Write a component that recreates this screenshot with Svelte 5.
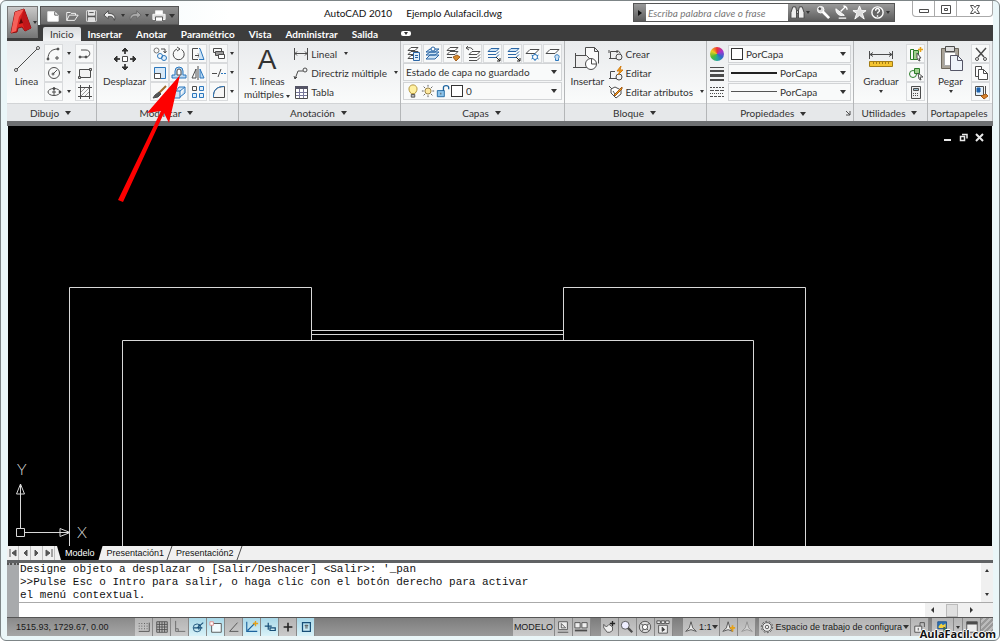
<script>
    const icons = {
        // quick access
        newFile: `<path d="M2 3h8l4 4v7H2z" fill="#fff" stroke="#eee"/><path d="M10 3v4h4"/>`,
        open: `<path d="M2 13V4h4l1 1h5v2M2 13l3-6h10l-4 6z" stroke="#fff" fill="#777"/>`,
        save: `<path d="M3 2h11v12H3z" fill="#555" stroke="#eee"/><path d="M5 2h7v5H5zM5 10h7v4H5z" fill="#ddd" stroke="#eee"/><path d="M6 4h5" />`,
        undo: `<path d="M6 2L1 7l5 4V8.500c4-.5 6 .5 7 4.500 2-5-1-8-7-8z" fill="#eee" stroke="#444"/>`,
        redo: `<path d="M10 2l5 5-5 4V8.500c-4-.5-6 .5-7 4.500-2-5 1-8 7-8z" fill="#aaa" stroke="#666"/>`,
        print: `<path d="M4 6V2h8v4M4 10v4h8v-4" fill="#fff" stroke="#eee"/><path d="M1 6h14v6H1z" fill="#ddd" stroke="#fff"/><path d="M4 9h8v5H4z" fill="#fff"/>`,
        // dibujo
        arc: `<path d="M2 13C2 6 6 3 12 3M9 12h4M11 10v4"/><circle cx="2" cy="13" r="1" fill="#444"/><circle cx="12" cy="3" r="1" fill="#444"/>`,
        circle: `<circle cx="8" cy="8" r="5.500"/><path d="M7 9l4-4"/><circle cx="7" cy="9" r="1"/>`,
        ellipse: `<ellipse cx="8" cy="8" rx="6" ry="3.500"/><path d="M6 8h4M8 5v6"/><circle cx="8" cy="4.500" r="1" fill="#444"/><circle cx="14" cy="8" r="1" fill="#444"/>`,
        polyline: `<path d="M4 4h5c5 0 5 7 0 7H4"/><circle cx="3" cy="11" r="1" fill="#444"/><circle cx="9" cy="11" r="1" fill="#444"/>`,
        rect: `<path d="M2.500 4.500h11v8h-11z" fill="#f2f2f2"/><path d="M1.500 11.500h2v2h-2zM12.500 3.500h2v2h-2z" fill="#ccc"/>`,
        hatch: `<path d="M3.500 1v14M12.500 1v14M1 3.500h14M1 12.500h14" /><path d="M4 8l4-4M4 12l8-8M8 12l4-4" stroke="#999"/>`,
        // modificar
        copy: `<circle cx="4.500" cy="4.500" r="2.500" stroke="#777"/><circle cx="12" cy="12" r="2.500" stroke="#2b77bd" fill="#e1effa"/><circle cx="8" cy="10" r="2.500" stroke="#2b77bd"/><path d="M9 3h4v3M11.500 5L13 7l1.500-2"/>`,
        rotate: `<path d="M10.500 3.500A5.500 5.500 0 1 1 6 3M6 1l3 2-3 2"/>`,
        stretch: `<path d="M8 13.500H2.500v-11H8M5 9.500h5M8 7.500l2 2-2 2"/><path d="M9 2.500h1l4 11H9" stroke="#2b77bd" fill="#cfe4f5"/>`,
        scale: `<path d="M2.500 2.500h11v11h-5v-5h-6z" fill="#d8e9f7" stroke="#2b77bd"/><path d="M2.500 8.500h6v5h-6z" fill="#fff"/>`,
        offset: `<path d="M1 13h14v-3h-3V6a4 4 0 0 0-8 0v4H1z" stroke="#2b77bd" fill="#b9d8f2"/><path d="M6 10V6a2 2 0 0 1 4 0v4z" fill="#fff"/>`,
        mirror: `<path d="M6 4v9H2z"/><path d="M10 4v9h4z" fill="#b9d8f2" stroke="#2b77bd"/><path d="M8 1v14"/>`,
        brush: `<path d="M14 2L7 9" stroke="#a06a2a" stroke-width="2"/><path d="M7 8L3 11l-2 3 5-1 3-3z" fill="#555"/>`,
        box: `<path d="M2 7h7v7H2zM5 7l3-4h6l-5 4M14 3v6l-5 4" fill="#cfe4f5" stroke="#2b77bd"/>`,
        array: `<path d="M2.500 2.500h4v4h-4z"/><path d="M9.500 2.500h4v4h-4zM2.500 9.500h4v4h-4zM9.500 9.500h4v4h-4z" stroke="#2b77bd" fill="#e1effa"/>`,
        order: `<path d="M2.500 2.500h8v4h-8z"/><path d="M4.500 5.500h8v4h-8z" fill="#999"/><path d="M7.500 8.500h6v4h-6z" fill="#fff"/>`,
        trim: `<path d="M1 8.500h5M7 12l3-8" /><path d="M10 8.500h5" stroke="#2b77bd" stroke-dasharray="2 1"/>`,
        fillet: `<path d="M2.500 13.500C2 6 6 2.500 13.500 2.500v11z" fill="#f6f6f6"/><path d="M2.500 13C2 6 6 2.500 13 2.500" stroke="#2b77bd"/>`,
        // anotación
        linear: `<path d="M1.500 2v12M14.500 2v12M2 7.500h12M4 5.500l-2 2 2 2M12 5.500l2 2-2 2"/>`,
        leader: `<path d="M2 14L5 6h5M1 11l1 3 2-2"/><circle cx="12" cy="5" r="2"/>`,
        table: `<path d="M2.500 2.500h12v12h-12z" fill="#fff"/><path d="M2 3.500h13" stroke="#556" stroke-width="3"/><path d="M3 8.500h11M3 11.500h11M6.500 5v9M10.500 5v9" stroke="#779"/>`,
        // capas
        layersBlue: `<path d="M5 3h9l-4 3H1zM5 6h9l-4 3H1zM5 9h9l-4 4H1z" fill="#cfe4f5" stroke="#2b66a5"/><circle cx="8" cy="3" r="2" fill="#fff" stroke="#2b66a5"/>`,
        layerProps: `<path d="M6 1.500h7l-3 3H3zM6 5.500h7l-3 3H3zM6 9.500h7l-3 3H3z" fill="#fff"/><path d="M8.500 6.500h6v8h-6z" fill="#e1effa" stroke="#2b66a5"/><path d="M10 9.500h3M10 11.500h3" stroke="#2b66a5"/>`,
        layerBrush: `<path d="M5 1.500h8l-3 3H2zM5 5.500h8l-3 3H2z" fill="#fff"/><path d="M2 11.500h5"/><path d="M8 11l4-2 3 2-4 4z" fill="#d58a2c" stroke="#a05a18"/>`,
        layerPrev: `<path d="M7 5.500h8l-3 3H4zM4 11.500h8l3-3M4 14.500h8l3-3" fill="#fff"/><path d="M8 4C7 2 5 1 2 2M3 0L1 2l3 2"/>`,
        layerIso: `<path d="M6 2.500h8l-3 3H3z" fill="#cfe4f5" stroke="#2b66a5"/><path d="M3 8.500h8l3-3M3 11.500h8l3-3" stroke="#2b66a5"/><path d="M11 11l4 4M15 12v3h-3" stroke="#222"/>`,
        layerFreeze: `<path d="M5 3.500h9l-4 4H1z" fill="#fff"/><path d="M10 7v8M6.500 9l7 4M13.500 9l-7 4" stroke="#2b77bd"/><circle cx="10" cy="11" r="2.500" stroke="#2b77bd" fill="#fff"/>`,
        layerOff: `<path d="M5 3.500h9l-4 4H1z" fill="#fff"/><path d="M10.500 14.500v-2c-3-5 6-5 3 0v2z" fill="#cfe4f5" stroke="#2b77bd"/>`,
        bulb: `<path d="M6 11C1 6 4 1 8 1s7 5 2 10z" fill="#fff0a0" stroke="#a98a2a"/><path d="M6 12h4v3H6z" fill="#bbb"/>`,
        sun: `<circle cx="8" cy="8" r="3.500" fill="#ffe9a0" stroke="#8a7233"/><path d="M8 1v2M8 13v2M1 8h2M13 8h2M3 3l1.500 1.500M11.500 11.500L13 13M13 3l-1.500 1.500M3 13l1.500-1.500"/>`,
        unlock: `<path d="M1.500 7.500h8v7h-8z" fill="#8cc3ea" stroke="#1c639e"/><path d="M8.500 8V4c0-3 6-3 6 0v2" stroke="#1c639e" stroke-width="1.500"/><path d="M5.500 10v2"/>`,
        // bloque
        create: `<path d="M8 12.500H1M2.500 12V5.500H10M10 4.500l2.500 3"/><circle cx="11" cy="11" r="3"/><path d="M1 4v3M9 4v3"/>`,
        edit: `<path d="M8 13.500H1M2.500 13V6.500H7"/><circle cx="11" cy="12" r="3"/><path d="M13 1L9 6h3l-2 4 5-5h-3z" fill="#f6a21e" stroke="#d27d12"/>`,
        attrs: `<path d="M3 5l4-2 6 3v4l-5 4-5-5z" fill="#fff"/><path d="M1 2l3 3"/><path d="M14 3L6 11l1 1 7-7z" fill="#f6a21e" stroke="#a05a18"/><path d="M5 7l2 3"/>`,
        // propiedades
        weight: `<path d="M1 2.500h14" /><path d="M1 6h14" stroke-width="2"/><path d="M1 10.500h14" stroke-width="3"/><path d="M1 15h14" stroke-width="2"/>`,
        linetype: `<path d="M1 3.500h14" stroke-dasharray="2 1"/><path d="M1 6.500h14" stroke-dasharray="4 1"/><path d="M1 9.500h14" stroke-dasharray="1 1"/><path d="M1 12.500h14" stroke-dasharray="3 1"/>`,
        // utilidades, portapapeles
        quickSelect: `<path d="M6 3.500H2.500v10H6" stroke="#2c7d2a"/><path d="M5.500 4.500h5v9h-5z" fill="#9fd08e" stroke="#2c7d2a"/><path d="M9 7l4 5h-2l1 3-2-1-1-2z" fill="#fff"/><path d="M12.500 1v5M10 3.500h5" stroke="#e6a117" stroke-width="1.500"/>`,
        selectSame: `<circle cx="5" cy="9" r="3.500" stroke="#2c7d2a"/><path d="M6.500 3.500h5v5h-5z" fill="#9fd08e" stroke="#2c7d2a"/><path d="M10 8l5 4h-3l1 3-2-1z" fill="#fff"/>`,
        calc: `<path d="M3.500 2.500h9v12h-9z" fill="#eee"/><path d="M5.500 4.500h5v2h-5z" fill="#9bc"/><path d="M5 9.500h6M5 11.500h6" stroke-dasharray="1 1"/>`,
        cut: `<path d="M3 2l8 9M13 2l-8 9" stroke-width="1.500"/><circle cx="4" cy="13" r="1.500"/><circle cx="12" cy="13" r="1.500"/>`,
        copyDoc: `<path d="M2.500 1.500h6v10h-6z" fill="#fff"/><path d="M5.500 4.500h5l4 4v6h-9z" fill="#fff"/><path d="M10.500 4.500v4h4"/>`,
        matchProps: `<path d="M2.500 2.500h8v9h-8zM12.500 2v8" fill="#e1effa"/><path d="M4 4h3v4H4z" fill="#1f62ad" stroke="#1f62ad"/><path d="M8 12l5-2 2 2-4 3z" fill="#d9822b" stroke="#a05a18"/>`,
        // info center
        binoculars: `<path d="M1 14V8l2-6h3l1 4v8zM9 14V6l1-4h3l2 6v6zM7 6h2v3H7z" fill="#eee" stroke="#444"/>`,
        key: `<circle cx="5" cy="5" r="3.500" fill="#ddd" stroke="#fff"/><path d="M7 7l7 7" stroke="#fff" stroke-width="3"/><circle cx="4" cy="4" r="1" fill="#555"/>`,
        dish: `<path d="M2 4c0 6 4 8 9 7z" fill="#eee" stroke="#fff"/><path d="M7 7l5-5M10 1c2 0 4 2 4 4M5 14h8" stroke="#fff" stroke-width="1.500"/>`,
        star: `<path d="M8 1l2 5h5l-4 3 2 6-5-4-5 4 2-6-4-3h5z" fill="#ddd" stroke="#fff"/>`,
        help: `<circle cx="8" cy="8" r="6" fill="#666" stroke="#fff" stroke-width="1.500"/><path d="M6 6c0-3 4-3 4 0 0 1.500-2 1.500-2 3M8 11v1.500" stroke="#fff" stroke-width="1.500"/>`,
        // status bar
        snap: `<path d="M2 4h10M2 7h10M2 10h10" stroke-dasharray="1 2"/><path d="M2 13h12V3"/>`,
        grid: `<path d="M2 2h12v12H2zM5 2v12M8 2v12M11 2v12M2 5h12M2 8h12M2 11h12"/>`,
        ortho: `<path d="M3 1v12h11M3 10h3v3" stroke="#666"/>`,
        polar: `<circle cx="7" cy="9" r="4.500" stroke="#174e77"/><path d="M3 9h10M7 9l7-6M9 5v6" stroke="#174e77" stroke-width="1.300"/>`,
        osnap: `<path d="M3 4h11v10H3z" fill="#f3fbfe"/><path d="M1 2h4v4H1z" fill="#fff" stroke="#d88"/>`,
        otrack: `<path d="M12 3L3 13h10"/>`,
        ducs: `<path d="M2 2v11h12M3 12l9-9" stroke="#1c639e" stroke-width="1.300"/><path d="M12 1v6M9 4h6" stroke="#e6a117" stroke-width="1.500"/>`,
        dyn: `<path d="M6 3v8M2 7h8M8 9h6v3H8z" stroke="#174e77" stroke-width="1.400"/>`,
        lwt: `<path d="M8 3v10M3 8h10" stroke="#222" stroke-width="1.800"/>`,
        qp: `<path d="M4 3h9v10H4z" stroke="#174e77" stroke-width="1.400"/><path d="M7 6h3v1H7zM7 9h3" />`,
        modelSpace: `<path d="M3 2h10v9H3zM2 14h12" fill="#eee"/><path d="M6 4v5h5z"/>`,
        layouts: `<path d="M1 3h6v6H1zM9 3h6v6H9z" fill="#eee"/><path d="M1 12h14" stroke-width="2"/>`,
        pan: `<path d="M2 5l3 3 3-3 4 3v4l-3 2H6L2 9z" fill="#eee"/><path d="M12 1v6M9 4h6" stroke="#222" stroke-width="1.500"/>`,
        zoom: `<circle cx="6" cy="6" r="4.500" fill="#eef"/><path d="M9 9l5 5" stroke-width="2.500"/>`,
        wheel: `<circle cx="8" cy="8" r="6.500" fill="#ddd"/><circle cx="8" cy="8" r="3" fill="#fff"/><path d="M3 4l3 2M13 4l-3 2M5 13l1-3M12 12l-2-2"/>`,
        motion: `<path d="M1 1h4v3H1zM6 1h4v3H6zM11 1h4v3h-4zM3 6h10v9H3z" fill="#eee"/><path d="M7 8v5l3-2z" fill="#333"/>`,
        annot: `<path d="M8 2L6 9l-4 4 6-2 6 2-4-4z" fill="#eee"/>`,
        annotStar: `<path d="M7 2L5 9l-4 4 6-2 5 2-3-4z" fill="#eee"/><path d="M12 6v7M9 9h6" stroke="#e6a117" stroke-width="2"/>`,
        gear: `<circle cx="8" cy="8" r="5" fill="#eee"/><circle cx="8" cy="8" r="6.500" stroke-dasharray="2 2"/><circle cx="8" cy="8" r="2"/>`,
        lock: `<path d="M2 7h8v7H2z" fill="#eee"/><path d="M8 7V3h5v5M6 9v3"/>`,
        flag: `<path d="M2 2h10v8H2z" fill="#2f73b5" stroke="#1c4e88"/><path d="M3 7l3-3 2 2 3-2v5H3z" fill="#f4d13c" stroke="none"/><path d="M9 8l5 4-5 3z" fill="#3c9a3c"/>`,
        clean: `<path d="M2 2h12v12H2z" fill="#eee"/><path d="M2 3.500h12" stroke-width="3"/>`,
    };

    const menus = ["Inicio", "Insertar", "Anotar", "Paramétrico", "Vista", "Administrar", "Salida"];
    let activeMenu = $state("Inicio");

    const draw = [["arc", "polyline"], ["circle", "rect"], ["ellipse", "hatch"]];
    const modify = [
        ["copy", "rotate", "stretch", "order"],
        ["scale", "offset", "mirror", "trim"],
        ["brush", "box", "array", "fillet"],
    ];
    const layerTools = ["layerProps", "layersBlue", "layerBrush", "layerPrev", "layerIso", "layerIso", "layerFreeze", "layerOff"];
    const blockTools = [["create", "Crear"], ["edit", "Editar"], ["attrs", "Editar atributos"]];

    const sheets = ["Presentación1", "Presentación2"];

    const modes = ["snap", "grid", "ortho", "polar", "osnap", "otrack", "ducs", "dyn", "lwt", "qp"];
    let activeModes = $state(["polar", "osnap", "ducs", "dyn", "qp"]);
    function toggleMode(mode) {
        activeModes = activeModes.includes(mode)
            ? activeModes.filter((m) => m !== mode)
            : [...activeModes, mode];
    }
</script>

{#snippet icon(name)}
    <svg class="icon" viewBox="0 0 16 16">{@html icons[name]}</svg>
{/snippet}

{#snippet tool(name)}
    <button class="tool" aria-label={name}>{@render icon(name)}</button>
{/snippet}

{#snippet footer(name, arrow = true)}
    <div class="panel-title">
        {name}
        {#if arrow}<i class="caret"></i>{/if}
    </div>
{/snippet}

<div class="window">
    <header>
        <div class="app-cell">
            <button class="app" aria-label="Menú de la aplicación">
                <svg width="22" height="28" viewBox="0 0 22 28">
                    <path d="M1 25L5 4l9-3 7 19-6 3-3-4-4 1-1 4z" fill="#e2231f" stroke="#8c1010" />
                    <path d="M5 4l9-3-3 5-2 3-3 14-5 2z" fill="#f4615a" stroke="none" />
                    <path d="M14 1l7 19-6 3-4-13z" fill="#c0171a" stroke="none" />
                    <path d="M9 16l2-6 2 5z" fill="#5d0808" stroke="none" />
                </svg>
                <i class="caret small"></i>
            </button>
        </div>
        <div class="titlebar">
            <div class="quick">
                {#each ["newFile", "open", "save", "undo"] as name}{@render tool(name)}{/each}
                <i class="caret small"></i>
                {@render tool("redo")}
                <i class="caret small"></i>
                {@render tool("print")}
                <i class="caret"></i>
            </div>
            <div class="title"><span>AutoCAD 2010</span><span>Ejemplo Aulafacil.dwg</span></div>
            <div class="info">
                <i class="play"></i>
                <input type="text" placeholder="Escriba palabra clave o frase" aria-label="Buscar" />
                {@render tool("binoculars")}
                <i class="caret small"></i>
                {#each ["key", "dish", "star", "help"] as name}{@render tool(name)}{/each}
                <i class="caret small"></i>
            </div>
            <div class="controls">
                <button aria-label="Minimizar"><svg width="12" height="12"><path d="M1.500 6.500h9v3h-9z" /></svg></button>
                <button aria-label="Restaurar"><svg width="12" height="12"><path d="M1.500 2.500h9v8h-9zM4.500 5.500h3v2h-3z" /></svg></button>
                <button class="close" aria-label="Cerrar"><svg width="12" height="12"><path d="M1.500 2.500h3l1.500 2 1.500-2h3L8 6.500l2.500 4h-3L6 8.500l-1.500 2h-3L4 6.500z" /></svg></button>
            </div>
        </div>
        <nav class="menus">
            {#each menus as menu}
                <button class:active={activeMenu === menu} onclick={() => (activeMenu = menu)}>{menu}</button>
            {/each}
            <span class="pill"><i class="caret small"></i></span>
        </nav>
    </header>

    <div class="ribbon">
        <section>
            <div class="panel">
                <button class="big">
                    <svg width="28" height="28"><path d="M4 24L24 4" /><circle cx="3" cy="25" r="1.500" fill="#fff" /><circle cx="25" cy="3" r="1.500" fill="#fff" /></svg>
                    Línea
                </button>
                <div class="rows">
                    {#each draw as [left, right]}
                        <div class="row">{@render tool(left)}<i class="caret small drop"></i>{@render tool(right)}</div>
                    {/each}
                </div>
            </div>
            {@render footer("Dibujo")}
        </section>

        <section>
            <div class="panel">
                <button class="big">
                    <svg width="28" height="28"><path d="M14 5v4M14 19v4M5 14h4M19 14h4" stroke-width="2" /><path d="M14 3l3 3h-6zM14 25l3-3h-6zM3 14l3-3v6zM25 14l-3-3v6z" fill="#333" stroke="#333" /><path d="M11.500 11.500h5v5h-5z" fill="#fff" /></svg>
                    Desplazar
                </button>
                <div class="rows modify">
                    {#each modify as names}
                        <div class="row">{#each names as name}{@render tool(name)}{/each}<i class="caret small drop"></i></div>
                    {/each}
                </div>
            </div>
            {@render footer("Modificar")}
        </section>

        <section>
            <div class="panel">
                <button class="big text">
                    <span class="letter">A</span>
                    T. líneas<span>múltiples <i class="caret small"></i></span>
                </button>
                <div class="rows labels">
                    <button>{@render icon("linear")}Lineal <i class="caret small"></i></button>
                    <button>{@render icon("leader")}Directriz múltiple <i class="caret small"></i></button>
                    <button>{@render icon("table")}Tabla</button>
                </div>
            </div>
            {@render footer("Anotación")}
        </section>

        <section>
            <div class="panel">
                <div class="rows wide">
                    <div class="row spread">{#each layerTools as name}{@render tool(name)}{/each}</div>
                    <div class="combo">
                        <select aria-label="Estado de capa"><option>Estado de capa no guardado</option></select>
                        <i class="caret"></i>
                    </div>
                    <div class="combo">
                        {@render icon("bulb")}{@render icon("sun")}{@render icon("unlock")}<b class="swatch"></b>
                        <select aria-label="Capa"><option>0</option></select>
                        <i class="caret"></i>
                    </div>
                </div>
            </div>
            {@render footer("Capas")}
        </section>

        <section>
            <div class="panel">
                <button class="big">
                    <svg width="28" height="28"><path d="M12.500 12V2.500h9l4 4v12M21.500 2.500v4h4" fill="#fafafa" /><path d="M2.500 10.500h11l3 3v9h-14z" fill="#eee" /><circle cx="18" cy="19" r="5.500" fill="#fff" /><path d="M18.500 14v5h5M0 22.500h4M2.500 8v4" /></svg>
                    Insertar
                </button>
                <div class="rows labels">
                    {#each blockTools as [name, label]}
                        <button>{@render icon(name)}{label}{#if name === "attrs"}<i class="caret small"></i>{/if}</button>
                    {/each}
                </div>
            </div>
            {@render footer("Bloque")}
        </section>

        <section>
            <div class="panel">
                <div class="rows wide props">
                    <div class="row">
                        <i class="wheel"></i>
                        <div class="combo">
                            <b class="swatch"></b>
                            <select aria-label="Color"><option>PorCapa</option></select>
                            <i class="caret"></i>
                        </div>
                    </div>
                    {#each ["weight", "linetype"] as name}
                        <div class="row">
                            {@render icon(name)}
                            <div class="combo">
                                <span class="sample {name}"></span>
                                <select aria-label={name}><option>PorCapa</option></select>
                                <i class="caret"></i>
                            </div>
                        </div>
                    {/each}
                </div>
            </div>
            <div class="panel-title">
                <span class="grow">Propiedades <i class="caret"></i></span>
                <svg width="6" height="6"><path d="M1 1l4 4M5 1v4H1" /></svg>
            </div>
        </section>

        <section>
            <div class="panel">
                <button class="big">
                    <svg width="28" height="28"><path d="M2.500 6v8M25.500 6v8M3 9.500h22M6 7.500l-3 2 3 2M22 7.500l3 2-3 2" /><path d="M2.500 16.500h23v5h-23z" fill="#f4c430" stroke="#a27c16" /><path d="M6.500 17v2M9.500 17v2M12.500 17v2M15.500 17v2M18.500 17v2M21.500 17v2" stroke="#a27c16" /></svg>
                    Graduar
                    <i class="caret small"></i>
                </button>
                <div class="rows">
                    {#each ["quickSelect", "selectSame", "calc"] as name}{@render tool(name)}{/each}
                </div>
            </div>
            {@render footer("Utilidades")}
        </section>

        <section>
            <div class="panel">
                <button class="big">
                    <svg width="28" height="28"><path d="M4.500 3.500h17v20h-17z" fill="#a9a398" stroke="#6d675c" /><path d="M8.500 1.500h9v5h-9z" fill="#ddd" /><path d="M7.500 7.500h11v13h-11z" fill="#fff" stroke="#aaa" /><path d="M13.500 10.500h7l5 5v10h-12z" fill="#eef3fa" stroke="#556" /><path d="M20.500 10.500v5h5" stroke="#556" /></svg>
                    Pegar
                    <i class="caret small"></i>
                </button>
                <div class="rows">
                    {#each ["cut", "copyDoc", "matchProps"] as name}{@render tool(name)}{/each}
                </div>
            </div>
            {@render footer("Portapapeles", false)}
        </section>
    </div>

    <main>
        <svg class="plan">
            <path d="M61.500 2000V161.500H303.500V214.500M303.500 204.500H555.500M303.500 208.500H555.500M555.500 214.500V161.500H797.500V2000" />
            <path d="M114.500 2000V214.500H745.500V2000" />
        </svg>
        <svg class="ucs" width="90" height="90">
            <path d="M8.500 72.500h8v8h-8zM12.500 72V28M17 76.500H62M12.500 28l-4 10h8zM62 76.500l-10-4v8z" />
            <text x="9" y="19">Y</text>
            <text x="69" y="82">X</text>
        </svg>
        <div class="doc-controls">
            <svg width="9" height="9"><path d="M1 7h7" stroke-width="2" /></svg>
            <svg width="9" height="9"><path d="M3 1.500h5v4M1.500 3.500h4v4h-4z" stroke-width="1.500" /></svg>
            <svg width="9" height="9"><path d="M1 1l7 7M8 1L1 8" stroke-width="2" /></svg>
        </div>
    </main>

    <div class="sheets">
        <button aria-label="Primera"><svg width="8" height="8"><path d="M1 0v8M7 1v6L3 4z" /></svg></button>
        <button aria-label="Anterior"><svg width="8" height="8"><path d="M6 1v6L3 4z" /></svg></button>
        <button aria-label="Siguiente"><svg width="8" height="8"><path d="M2 1v6l3-3z" /></svg></button>
        <button aria-label="Última"><svg width="8" height="8"><path d="M7 0v8M1 1v6l4-3z" /></svg></button>
        <button class="sheet current">Modelo</button>
        {#each sheets as sheet}
            <button class="sheet">{sheet}</button>
            <svg width="8" height="14"><path d="M6 0L1 14" /></svg>
        {/each}
    </div>

    <div class="command">
        <div class="grip"></div>
        <div class="console">
            <div class="history">
                <div>
                    <p>Designe objeto a desplazar o [Salir/Deshacer] &lt;Salir&gt;: '_pan</p>
                    <p>&gt;&gt;Pulse Esc o Intro para salir, o haga clic con el botón derecho para activar</p>
                    <p>el menú contextual.</p>
                </div>
                <div class="vscroll"><i class="caret up"></i><i class="caret small"></i></div>
            </div>
            <div class="prompt">
                <input type="text" aria-label="Línea de comandos" />
                <div class="hscroll"><i class="arrow left"></i><b></b><i class="arrow"></i></div>
            </div>
        </div>
    </div>

    <footer>
        <span class="coords">1515.93, 1729.67, 0.00</span>
        {#each modes as mode}
            <button class="cell" class:on={activeModes.includes(mode)} aria-label={mode} onclick={() => toggleMode(mode)}>{@render icon(mode)}</button>
        {/each}
        <span class="fill"></span>
        <button class="cell label">MODELO</button>
        {#each ["modelSpace", "layouts"] as name}<button class="cell" aria-label={name}>{@render icon(name)}</button>{/each}
        <span class="gap"></span>
        {#each ["pan", "zoom", "wheel", "motion"] as name}<button class="cell" aria-label={name}>{@render icon(name)}</button>{/each}
        <span class="gap"></span>
        <button class="cell label">{@render icon("annot")}1:1<i class="caret"></i></button>
        <button class="cell" aria-label="Visibilidad">{@render icon("annotStar")}</button>
        <button class="cell faded" aria-label="Escala automática">{@render icon("annot")}</button>
        <span class="gap thin"></span>
        <button class="cell label">{@render icon("gear")}Espacio de trabajo de configura<i class="caret"></i></button>
        <button class="cell" aria-label="Bloquear">{@render icon("lock")}</button>
        <span class="gap thin"></span>
        <button class="cell wide" aria-label="Rendimiento">{@render icon("flag")}</button>
        <button class="cell slim" aria-label="Opciones"><i class="caret small"></i></button>
        <button class="cell" aria-label="Limpiar pantalla">{@render icon("clean")}</button>
        <span class="corner"></span>
    </footer>

    <svg class="pointer" width="70" height="130"><path d="M64 3L31 41l14-2L2 128l5 2L48 41l5 10z" /></svg>
    <div class="watermark">AulaFacil.com</div>
</div>

<style>
    :global(body) {
        background: #fff;
    }
    .window {
        position: relative;
        box-sizing: border-box;
        min-height: 100vh;
        display: flex;
        flex-direction: column;
        padding: 0 6px 4px;
        border: 1px solid #7d8587;
        border-radius: 6px;
        background: #eaf6f8;
        font-family: Lato, "Open Sans", sans-serif;
        font-size: 10px;
        line-height: 14px;
        color: #333;
        overflow: hidden;
    }
    button,
    input,
    select {
        font: inherit;
        color: inherit;
        margin: 0;
        padding: 0;
        border: 0;
        background: none;
        appearance: none;
        white-space: nowrap;
    }
    svg {
        fill: none;
        stroke: #4c4c4c;
        flex: none;
    }
    .icon {
        width: 16px;
        height: 16px;
    }
    .caret {
        flex: none;
        display: inline-block;
        border: 3px solid transparent;
        border-top: 4px solid #333;
        border-bottom: 0;
        vertical-align: middle;
    }
    .caret.small {
        border-width: 2px;
        border-top-width: 3px;
        border-bottom: 0;
    }

    /* title bar and menus */
    header {
        display: grid;
        grid-template-columns: 32px 1fr;
        grid-template-rows: 24px 16px;
    }
    .app-cell {
        grid-row: 1 / 3;
        padding-top: 5px;
        background: linear-gradient(transparent 24px, #3d3d3d 24px);
    }
    .app {
        display: flex;
        align-items: center;
        width: 31px;
        height: 32px;
        padding: 0 2px;
        border: 1px solid #777;
        background: linear-gradient(#c8c8c8, #777);
        box-sizing: border-box;
    }
    .app .caret {
        margin-left: 1px;
    }
    .titlebar {
        display: flex;
        align-items: flex-start;
        background: linear-gradient(90deg, #eaf6f8, #fff 20%, #fff);
    }
    .tool {
        display: flex;
        align-items: center;
        justify-content: center;
        width: 19px;
        height: 19px;
        box-sizing: border-box;
    }
    .quick {
        display: flex;
        align-items: center;
        width: 139px;
        height: 19px;
        margin: 5px 0 0 1px;
        padding: 0 3px;
        box-sizing: border-box;
        justify-content: space-between;
        background: linear-gradient(#8f8f8f, #6b6b6b);
        border: 1px solid #555;
    }
    .info .icon {
        width: 15px;
        height: 15px;
    }
    .quick .icon {
        width: 14px;
        height: 14px;
    }
    .quick .tool,
    .info .tool {
        width: 18px;
        height: 17px;
    }
    .title {
        flex: 1;
        display: flex;
        justify-content: center;
        gap: 14px;
        padding: 5px 0 0 14px;
        color: #111;
        white-space: nowrap;
    }
    .info {
        display: flex;
        align-items: center;
        width: 262px;
        height: 19px;
        margin-top: 2px;
        box-sizing: border-box;
        border: 1px solid #555;
        background: linear-gradient(#9a9a9a, #5c5c5c);
    }
    .play {
        margin: 0 4px;
        border: 3px solid transparent;
        border-left: 4px solid #111;
        border-right: 0;
    }
    .info input {
        flex: 1;
        min-width: 0;
        height: 17px;
        padding: 0 2px;
        background: #fff;
        font-style: italic;
    }
    .info input::placeholder {
        color: #777;
    }
    .info > .caret {
        margin-right: 4px;
    }
    .controls {
        display: flex;
        margin-left: 17px;
        height: 15px;
        border: 1px solid #aaa;
        border-top: 0;
        border-radius: 0 0 4px 4px;
    }
    .controls button {
        width: 22px;
        border-right: 1px solid #aaa;
    }
    .controls .close {
        width: 35px;
        border-right: 0;
    }
    .controls svg {
        display: block;
        margin: 0 auto;
    }
    .menus {
        display: flex;
        align-items: stretch;
        padding-left: 4px;
        background: #3d3d3d;
        color: #fff;
        font-weight: 700;
    }
    .menus button {
        padding: 2px 7px 0;
    }
    .menus .active {
        margin-top: 2px;
        padding: 0 7px;
        background: linear-gradient(#d8dadc, #f4f5f6);
        color: #333;
        border-radius: 2px 2px 0 0;
        font-weight: 400;
    }
    .pill {
        align-self: center;
        display: flex;
        justify-content: center;
        width: 10px;
        margin-left: 16px;
        padding: 1px 0;
        border-radius: 2px;
        background: #fff;
    }

    /* ribbon */
    .ribbon {
        display: grid;
        grid-template-columns: 90fr 142fr 162fr 164fr 142fr 147fr 74fr 65fr;
        border-bottom: 5px solid #6e7072;
        background: #f4f5f6;
    }
    section {
        min-width: 0;
        border-right: 1px solid #b4b6b8;
    }
    .panel {
        display: flex;
        justify-content: space-between;
        height: 59px;
        padding: 3px 2px 0;
        background: linear-gradient(#e9ebed, #fafbfb);
    }
    .panel-title {
        display: flex;
        align-items: center;
        justify-content: center;
        gap: 6px;
        height: 17px;
        padding-right: 2px;
        border-top: 1px solid #d2d4d6;
        background: #e6e8ea;
        white-space: nowrap;
    }
    .grow {
        flex: 1;
        text-align: center;
    }
    .grow .caret {
        margin-left: 3px;
    }
    .big {
        flex: 1;
        display: flex;
        flex-direction: column;
        align-items: center;
        padding-top: 1px;
    }
    .big svg {
        margin-bottom: 1px;
    }
    .big .caret {
        margin-top: 2px;
    }
    .letter {
        font-family: "Liberation Sans", sans-serif;
        font-size: 28px;
        line-height: 31px;
    }
    .big.text {
        padding-top: 0;
        line-height: 13px;
    }
    .rows {
        display: grid;
        grid-auto-rows: 19px;
    }
    .rows.wide {
        flex: 1;
        min-width: 0;
    }
    .row {
        display: flex;
        align-items: center;
    }
    .row.spread {
        justify-content: space-between;
    }
    .ribbon .rows .tool {
        border: 1px solid #d9dbdd;
        background: #f8f9f9;
    }
    .drop {
        margin: 0 4px;
    }
    .modify .tool:nth-child(4) {
        margin-left: 2px;
    }
    .modify .drop {
        margin: 0 2px;
    }
    .labels button {
        display: flex;
        align-items: center;
        gap: 2px;
    }
    .labels .caret {
        margin-left: 5px;
    }
    .combo {
        flex: 1;
        min-width: 0;
        height: 18px;
        box-sizing: border-box;
        display: flex;
        align-items: center;
        padding: 0 4px 0 2px;
        border: 1px solid #d2d4d6;
        background: #f9fafa;
    }
    .combo select {
        flex: 1;
        min-width: 0;
    }
    .combo .icon {
        width: 14px;
        height: 14px;
        margin-right: 1px;
    }
    .swatch {
        width: 10px;
        height: 10px;
        margin-right: 3px;
        border: 1px solid #333;
        background: #fff;
    }
    .props .row {
        gap: 3px;
    }
    .wheel {
        width: 14px;
        height: 14px;
        margin: 0 1px;
        border-radius: 50%;
        background: conic-gradient(#e33, #a3c, #36c, #2a9, #5b3, #ec2, #e33);
    }
    .sample {
        width: 46px;
        margin-right: 3px;
        border-top: 1px solid #555;
    }
    .sample.weight {
        border-top: 2px solid #222;
    }

    /* drawing area */
    main {
        position: relative;
        flex: 1;
        min-height: 200px;
        margin: 0 1px;
        background: #000;
        overflow: hidden;
    }
    .plan {
        position: absolute;
        inset: 0;
        width: 100%;
        height: 100%;
        stroke: #d8d8d8;
    }
    .ucs {
        position: absolute;
        left: 0;
        bottom: 0;
        stroke: #d8d8d8;
    }
    .ucs text {
        font: 300 16px Lato, sans-serif;
        fill: #d8d8d8;
        stroke: none;
    }
    .doc-controls {
        position: absolute;
        top: 7px;
        right: 8px;
        display: flex;
        gap: 7px;
    }
    .doc-controls svg {
        stroke: #e8e8e8;
    }

    .sheets {
        display: flex;
        align-items: center;
        height: 14px;
        background: #f0f0f0;
        border-bottom: 3px solid #606264;
        font-family: "Liberation Sans", sans-serif;
        font-size: 9px;
        color: #111;
    }
    .sheets button:not(.sheet) {
        width: 12px;
        height: 14px;
        border-right: 1px solid #c0c0c0;
    }
    .sheets button svg {
        stroke: #555;
        fill: #555;
        display: block;
        margin: 0 auto;
    }
    .sheet {
        padding: 0 2px;
    }
    .sheet.current {
        padding: 0 8px;
        margin: 0 2px;
        background: #000;
        color: #fff;
        clip-path: polygon(0 0, 100% 0, calc(100% - 4px) 100%, 4px 100%);
    }

    /* command line */
    .command {
        display: flex;
        background: #fff;
    }
    .grip {
        width: 12px;
        background: #a8aaac;
        border-top: 2px dotted #555;
    }
    .console {
        flex: 1;
        font-family: "Liberation Mono", monospace;
        font-size: 11px;
        line-height: 13px;
        color: #111;
    }
    .history {
        display: flex;
        justify-content: space-between;
        border-bottom: 1px solid #aaa;
    }
    .history p {
        margin: 0 1px;
    }
    .vscroll {
        width: 12px;
        display: flex;
        flex-direction: column;
        align-items: center;
        justify-content: space-between;
        padding: 6px 0;
        box-sizing: border-box;
        background: #f0f0f0;
    }
    .caret.up {
        border-width: 2px;
        border-top: 0;
        border-bottom: 3px solid #333;
    }
    .prompt {
        display: flex;
        height: 14px;
    }
    .prompt input {
        flex: 1;
    }
    .hscroll {
        display: flex;
        align-items: center;
        justify-content: space-between;
        width: 68px;
        padding: 0 20px 0 6px;
        box-sizing: border-box;
        background: #f0f0f0;
    }
    .hscroll b {
        width: 10px;
        height: 11px;
        border: 1px solid #bbb;
        background: #e0e0e0;
    }
    .arrow {
        border: 3px solid transparent;
        border-left: 3px solid #333;
        border-right: 0;
    }
    .arrow.left {
        border-left: 0;
        border-right: 3px solid #333;
    }

    /* status bar */
    footer {
        display: flex;
        height: 18px;
        border-top: 1px solid #555;
        background: linear-gradient(#7d7d7d, #999);
        font-family: "Liberation Sans", sans-serif;
        font-size: 9px;
        color: #1a1a1a;
    }
    .coords {
        width: 119px;
        padding: 2px 0 0 9px;
        background: linear-gradient(#8a8a8a, #a6a6a6);
        white-space: nowrap;
    }
    .fill {
        flex: 1;
    }
    .cell {
        display: flex;
        align-items: center;
        justify-content: center;
        width: 18px;
        box-sizing: border-box;
        border-right: 1px solid #888;
        background: linear-gradient(#b4b4b4, #cacaca);
    }
    .cell.on {
        background: linear-gradient(#a9d8e8, #d9f2f8);
    }
    .cell .icon {
        width: 14px;
        height: 14px;
    }
    .cell.label {
        width: auto;
        gap: 1px;
        padding: 0 1px;
    }
    .cell.wide {
        width: 22px;
    }
    .cell.slim {
        width: 9px;
    }
    .faded .icon {
        opacity: 0.4;
    }
    .gap {
        width: 10px;
    }
    .gap.thin {
        width: 3px;
    }
    .corner {
        width: 12px;
        background: repeating-linear-gradient(135deg, #999 0 2px, #bbb 2px 4px);
    }

    .pointer {
        position: absolute;
        left: 115px;
        top: 71px;
        fill: #fe0000;
        stroke: none;
        pointer-events: none;
    }
    .watermark {
        position: absolute;
        right: 3px;
        bottom: 0;
        font-family: "Open Sans", sans-serif;
        font-size: 11px;
        font-weight: 700;
        line-height: 12px;
        color: #111;
        text-shadow: 1px 0 #fff, -1px 0 #fff, 0 1px #fff, 0 -1px #fff;
    }
</style>
